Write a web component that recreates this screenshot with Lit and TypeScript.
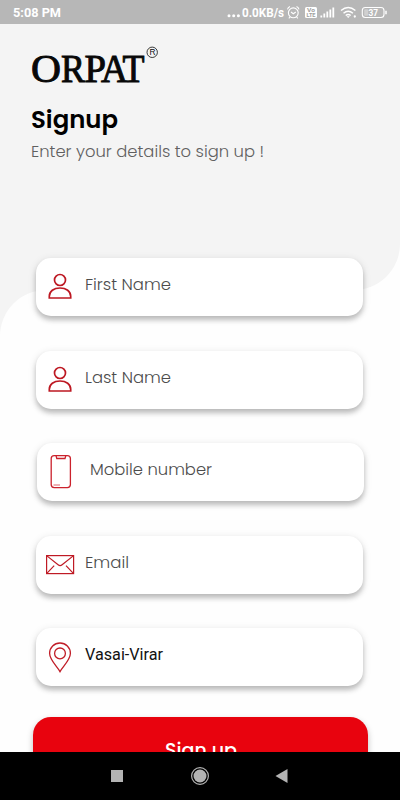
import { LitElement, html, svg, css, TemplateResult } from "lit";
import { customElement, property } from "lit/decorators.js";

const person = svg`<g fill="none" stroke="#bd1822" stroke-width="1.7">
  <circle cx="24" cy="22" r="5.5"/>
  <path d="M13.300 40v-1.700c0-5 4.500-8.300 10.700-8.300s10.700 3.300 10.700 8.300v1.700z"/></g>`;
const phone = svg`<g fill="none" stroke="#cb222c" stroke-width="1.3">
  <rect x="14.200" y="12.600" width="19.200" height="32" rx="3"/>
  <path d="M19 12.600l.8 2.900h8.200l.8-2.900"/><path d="M16.500 42h6.500" stroke-width="1" opacity=".7"/></g>`;
const mail = svg`<g fill="none" stroke="#bf1a25" stroke-width="1.2">
  <rect x="10.600" y="19.600" width="27" height="18"/>
  <path d="M10.600 19.600l11.500 9.200c1.200 1 2.800 1 4 0l11.500-9.200M10.600 37.600l7.600-8M37.600 37.600l-7.600-8"/></g>`;
const pin = svg`<g fill="none" stroke="#c01d27" stroke-width="1.3">
  <path d="M24 43.600c-2.500-5-10.400-11.500-10.400-18.400a10.400 10.200 0 0 1 20.800 0c0 6.900-7.900 13.400-10.400 18.400z"/>
  <circle cx="24" cy="25.400" r="5.400"/></g>`;

@customElement("fit-text")
class FitText extends LitElement {
  @property() text = "";
  @property({ type: Number }) width = 100;
  @property({ type: Number }) size = 16;
  @property({ type: Number }) height = 24;
  static styles = css`
    :host { display: block; line-height: 0; }
    svg { display: block; overflow: visible; fill: currentColor; }
  `;
  render() {
    return html`<svg width=${this.width} height=${this.height}>
      <text x="0" y=${this.height - 6} font-size=${this.size} textLength=${this.width} lengthAdjust="spacingAndGlyphs">${this.text}</text>
    </svg>`;
  }
}

interface Field { label: string; width: number; icon: TemplateResult | unknown; cls: string; }

const fields: Field[] = [
  { label: "First Name", width: 86, icon: person, cls: "" },
  { label: "Last Name", width: 86, icon: person, cls: "" },
  { label: "Mobile number", width: 122, icon: phone, cls: "mobile" },
  { label: "Email", width: 44, icon: mail, cls: "" },
  { label: "Vasai-Virar", width: 78, icon: pin, cls: "filled" },
];

@customElement("app-root")
class AppRoot extends LitElement {
  static styles = css`
    :host { display: flex; flex-direction: column; width: 400px; height: 800px; overflow: hidden;
      background: #fefefe; font-family: Poppins, Inter, "Open Sans", sans-serif; }
    svg { display: block; overflow: visible; }
    .status { flex: none; height: 24px; background: #b7b7b7; color: #fff; display: flex; justify-content: space-between;
      box-sizing: border-box; padding-left: 13px; font-family: Roboto, sans-serif; font-weight: 700; }
    .screen { flex: 1; min-height: 0; overflow: hidden; background: #fefefe; display: flex; flex-direction: column; }
    .head { flex: none; height: 266px; box-sizing: border-box; background: #f4f4f4; border-bottom-right-radius: 46px; padding: 19px 0 0 31px; }
    .title { font-weight: 600; color: #000; margin-top: 11px; }
    .sub { font-weight: 300; color: #606060; margin-top: 5px; }
    .corner { flex: none; }
    .form { display: flex; flex-direction: column; gap: 34.5px; margin: -78px 0 0 35.500px; }
    .field { width: 327.500px; height: 58px; border-radius: 15px; background: #fff; display: flex; align-items: flex-start;
      box-shadow: 0 4px 5px rgba(0,0,0,.2), 0 2px 8px rgba(0,0,0,.12); color: #4c4c4c; font-weight: 300; }
    .field svg { flex: none; width: 48px; height: 58px; margin-left: .5px; }
    .field fit-text { margin: 14px 0 0 .7px; }
    .mobile { margin-left: 1px; }
    .mobile fit-text { margin-left: 5px; }
    .filled { color: #111; font-family: Roboto, sans-serif; font-weight: 400; }
    .button { width: 335px; height: 64px; margin: -3.500px 0 0 -2.500px; border-radius: 18px; background: #e8030e; color: #fff;
      font-weight: 500; display: flex; justify-content: center; box-shadow: 0 3px 6px rgba(0,0,0,.25); }
    .button fit-text { margin-top: 22px; }
    .nav { flex: none; height: 48px; background: #000; position: relative; z-index: 1; }
  `;

  render() {
    return html`
      <div class="status">
        <svg width="60" height="24"><text x="0" y="17" font-size="12.5" fill="#fff" textLength="48" lengthAdjust="spacingAndGlyphs">5:08 PM</text></svg>
        <svg width="180" height="24" viewBox="220 0 180 24" fill="none" stroke="#fff" stroke-width="1.1">
          <g fill="#fff" stroke="none"><circle cx="229" cy="15.700" r="1.500"/><circle cx="233.700" cy="15.700" r="1.500"/><circle cx="238.400" cy="15.700" r="1.500"/>
          <text x="242" y="17" font-size="12" textLength="42" lengthAdjust="spacingAndGlyphs">0.0KB/s</text></g>
          <circle cx="293.300" cy="12.800" r="4.900"/><path d="M291 12l2.300 1.800 2.500-1.800M287.500 9.300q.5-2 2.500-2.700M299 9.300q-.5-2-2.500-2.700M290 17l-1.200 1.300M296.600 17l1.200 1.300"/>
          <rect x="305" y="7" width="12" height="11" rx="1.500" fill="#fff" stroke="none"/>
          <g fill="#a0a0a0" stroke="none" font-size="5"><text x="307" y="11.800" textLength="8" lengthAdjust="spacingAndGlyphs">Vo</text><text x="306.500" y="17" textLength="9" lengthAdjust="spacingAndGlyphs">LTE</text></g>
          <path d="M321.300 15.500v2M324.300 13.500v4M327.300 11.500v6M330.300 9.500v8M333.300 7.500v10" stroke-width="1.800"/>
          <path d="M341 10.500q7.200-6 14.400 0M343.500 13.200q4.700-4 9.400 0M345.700 15.500q2.500-2 5 0" stroke-width="1.500"/><path d="M346.500 16.300l1.700 1.700 1.700-1.700z" fill="#fff" stroke="none"/>
          <circle cx="354.800" cy="16.500" r=".6"/>
          <rect x="362.300" y="7.500" width="21.700" height="10" rx="3"/><path d="M386 10.700v3.500" stroke-width="1.500"/><rect x="364.200" y="9.300" width="4" height="6.400" rx="1" fill="#d0d0d0" stroke="none"/>
          <text x="368.500" y="15.700" font-size="8.500" fill="#fff" stroke="none" textLength="9.500" lengthAdjust="spacingAndGlyphs">37</text>
        </svg>
      </div>
      <div class="screen">
        <div class="head">
          <svg width="130" height="44" viewBox="31 43 130 44" font-family="Liberation Serif, serif" fill="#080808">
            <g font-size="40.500" stroke="#080808" stroke-width="1">
              <text x="31" y="82" textLength="30" lengthAdjust="spacingAndGlyphs">O</text>
              <text x="61" y="82" textLength="24" lengthAdjust="spacingAndGlyphs">R</text>
              <text x="84.500" y="82" textLength="21.500" lengthAdjust="spacingAndGlyphs">P</text>
              <text x="101" y="82" textLength="27" lengthAdjust="spacingAndGlyphs">A</text>
              <text x="122.500" y="82" textLength="22" lengthAdjust="spacingAndGlyphs">T</text>
            </g>
            <circle cx="152.200" cy="52.300" r="5.200" fill="none" stroke="#222" stroke-width=".9"/>
            <text x="149.500" y="55.300" font-size="8.500" font-family="Liberation Sans" textLength="6" lengthAdjust="spacingAndGlyphs">R</text>
          </svg>
          <fit-text class="title" text="Signup" width="87" size="24.5" height="36"></fit-text>
          <fit-text class="sub" text="Enter your details to sign up !" width="233" size="16.8" height="24"></fit-text>
        </div>
        <svg class="corner" width="46" height="46" viewBox="0 0 46 46"><path fill="#f4f4f4" d="M0 0h46A46 46 0 0 0 0 46z"/></svg>
        <div class="form">
          ${fields.map(f => html`<div class="field ${f.cls}">
            <svg viewBox="0 0 48 58">${f.icon}</svg>
            <fit-text text=${f.label} width=${f.width} size=${f.cls === "filled" ? 16 : 16.8} height="24"></fit-text>
          </div>`)}
          <div class="button"><fit-text text="Sign up" width="72" size="19.5" height="24"></fit-text></div>
        </div>
      </div>
      <div class="nav">
        <svg width="400" height="48" fill="#b3b3b3"><rect x="111" y="18" width="12" height="12"/>
          <circle cx="200" cy="24" r="6.500"/><circle cx="200" cy="24" r="8.400" fill="none" stroke="#b3b3b3" stroke-width="1.200"/>
          <path d="M275.500 24l12-7v14z"/></svg>
      </div>`;
  }
}
